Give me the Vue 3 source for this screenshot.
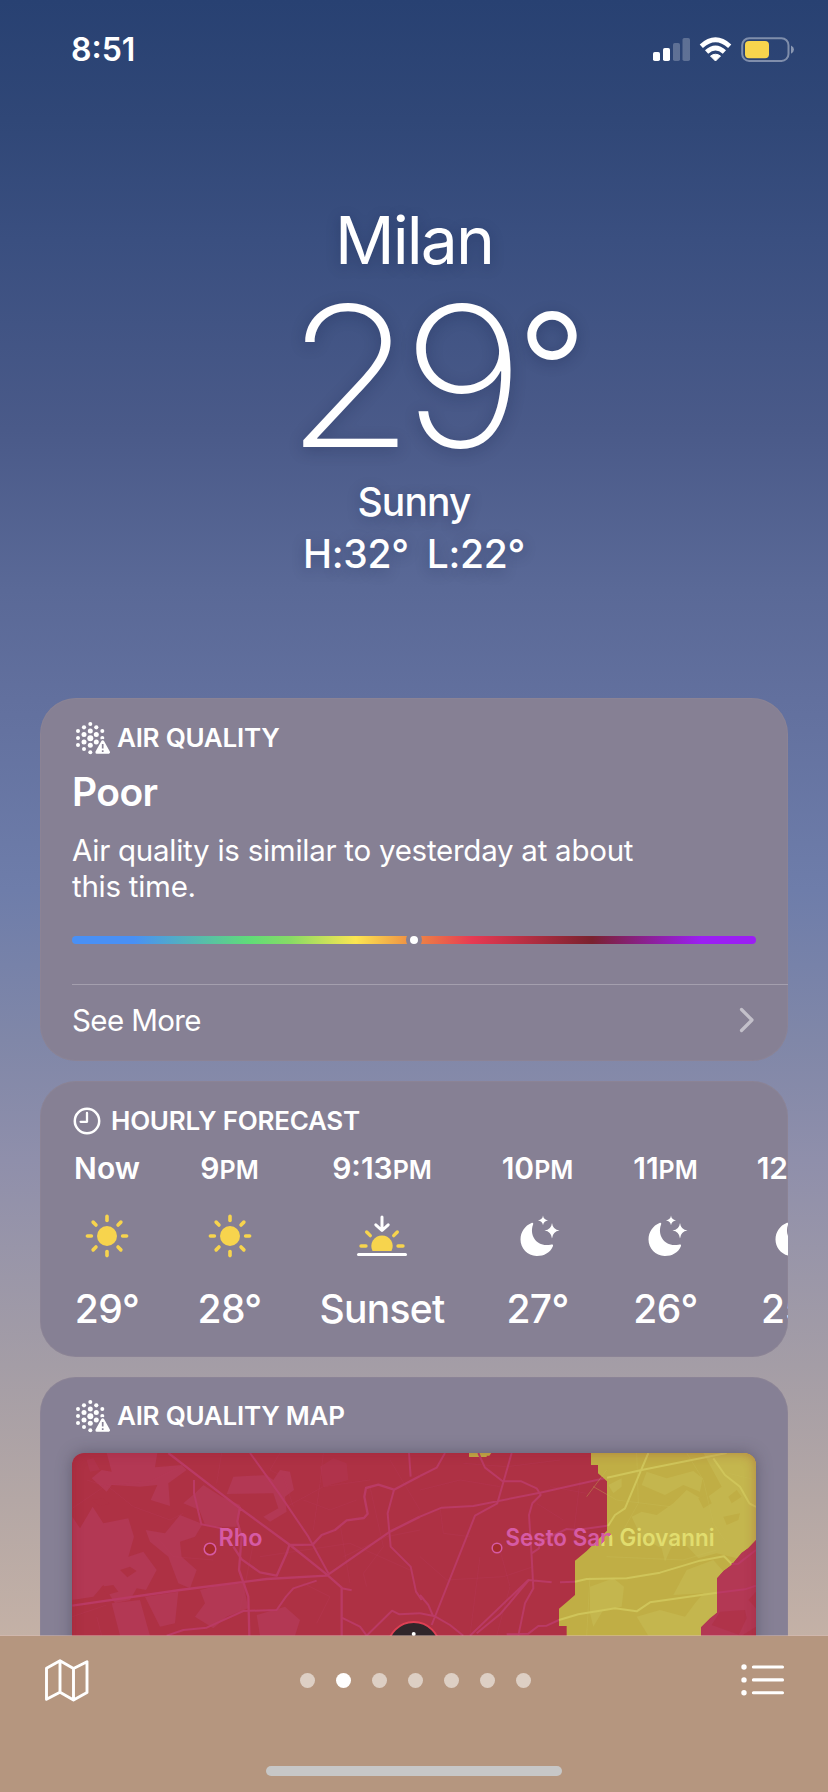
<script setup>
const hours = [
  { label: 'Now', suffix: '', icon: 'sun', value: '29°', width: 122 },
  { label: '9', suffix: 'PM', icon: 'sun', value: '28°', width: 123 },
  { label: '9:13', suffix: 'PM', icon: 'sunset', value: 'Sunset', width: 182 },
  { label: '10', suffix: 'PM', icon: 'moon', value: '27°', width: 129 },
  { label: '11', suffix: 'PM', icon: 'moon', value: '26°', width: 127 },
  { label: '12', suffix: 'AM', icon: 'moon', value: '25°', width: 128 },
]
const rays = [0, 45, 90, 135, 180, 225, 270, 315]
const dots = [
  [3, 9, 2], [3, 16, 2], [3, 23, 2],
  [9, 5.3, 2.1], [9, 12.6, 2.5], [9, 20, 2.5], [9, 27, 2],
  [15.3, 2, 2], [15.3, 9, 2.5], [15.3, 16.2, 3], [15.3, 23.3, 2.5], [15.3, 30.3, 2],
  [21.3, 5.3, 2.1], [21.3, 12.6, 2.5], [21.3, 20, 2.5],
  [27.3, 9, 2], [27.3, 16, 2],
]
const pages = 7
const activePage = 1
</script>

<template>
  <div class="screen">
    <header class="status">
      <span class="clock">8:51</span>
      <svg class="status-icons" width="142" height="26" viewBox="0 0 142 26">
        <g fill="#fff">
          <rect x="0" y="15" width="7" height="9" rx="1.8" />
          <rect x="10" y="11" width="7" height="13" rx="1.8" />
          <g opacity=".24">
            <rect x="20" y="6" width="7" height="18" rx="1.8" />
            <rect x="29.500" y="1" width="7.500" height="23" rx="1.800" />
          </g>
          <path d="M62.500 24 L67.500 19 Q62.500 15.500 57.500 19 Z" stroke="#fff" stroke-width="1" stroke-linejoin="round" />
        </g>
        <g fill="none" stroke="#fff" stroke-width="4.800">
          <path d="M48.300 9.200 Q62.500 -3.600 76.700 9.200" />
          <path d="M53.600 15 Q62.500 7 71.400 15" />
        </g>
        <rect x="89.200" y="1.200" width="46.300" height="22.700" rx="7" fill="none" stroke="#fff" stroke-opacity=".4" stroke-width="2" />
        <rect x="92" y="4" width="24" height="17.200" rx="4" fill="#f7d44d" />
        <path d="M138 8.500 Q141 10 141 12.500 T138 16.800 Z" fill="#fff" opacity=".45" />
      </svg>
    </header>

    <section class="summary">
      <h1 class="city">Milan</h1>
      <div class="temperature"><span class="digits">29</span><span class="degree">°</span></div>
      <div class="condition">Sunny</div>
      <div class="range"><span>H:32°</span><span>L:22°</span></div>
    </section>

    <main class="cards">
      <section class="card air">
        <h2 class="card-title">
          <svg class="air-icon" width="36" height="34" viewBox="0 0 36 34">
            <circle v-for="(d, i) in dots" :key="i" :cx="d[0]" :cy="d[1]" :r="d[2]" fill="#fff" />
            <path d="M27.700 19.500 L33.600 30.300 H21.800 Z" fill="#fff" stroke="#868094" stroke-width="5" stroke-linejoin="round" />
            <path d="M27.700 19.800 L33.500 30.300 H21.900 Z" fill="#fff" stroke="#fff" stroke-width="3" stroke-linejoin="round" />
            <path d="M27.700 22 V26.500 M27.700 28.300 V30" stroke="#868094" stroke-width="1.700" />
          </svg>
          <span>AIR QUALITY</span>
        </h2>
        <div class="rating">Poor</div>
        <p class="description">Air quality is similar to yesterday at about<br />this time.</p>
        <div class="scale"><span class="marker"></span></div>
        <div class="more">
          <span>See More</span>
          <svg width="16" height="26" viewBox="0 0 16 26"><path d="M2.500 2.500 L13 13 L2.500 23.500" fill="none" stroke="#fff" stroke-opacity=".5" stroke-width="3.200" stroke-linecap="round" stroke-linejoin="round" /></svg>
        </div>
      </section>

      <section class="card hourly">
        <h2 class="card-title">
          <svg class="clock-icon" width="28" height="28" viewBox="0 0 28 28">
            <circle cx="14" cy="14" r="12.200" fill="none" stroke="#fff" stroke-width="2.500" />
            <path d="M14 6 V14.800 H7.600" fill="none" stroke="#fff" stroke-width="2.300" stroke-linecap="round" stroke-linejoin="round" />
          </svg>
          <span>HOURLY FORECAST</span>
        </h2>
        <div class="hours">
          <div v-for="(h, i) in hours" :key="i" class="hour" :style="{ width: h.width + 'px' }">
            <div class="hour-time">{{ h.label }}<small v-if="h.suffix">{{ h.suffix }}</small></div>
            <svg v-if="h.icon === 'sun'" width="52" height="52" viewBox="-26 -26 52 52">
              <circle r="10" fill="#f7d44d" />
              <path v-for="a in rays" :key="a" d="M0 -15.600 V-19.600" :transform="`rotate(${a})`" stroke="#f7d44d" stroke-width="3.600" stroke-linecap="round" />
            </svg>
            <svg v-else-if="h.icon === 'sunset'" width="52" height="52" viewBox="-26 -26 52 52">
              <g fill="none" stroke="#fff" stroke-width="3" stroke-linecap="round" stroke-linejoin="round">
                <path d="M0 -19 V-6 M-6.200 -11.200 L0 -5.500 L6.200 -11.200" />
                <path d="M-23.500 18.500 H23.500" />
              </g>
              <path d="M-9.500 15 A10.700 10.700 0 1 1 9.500 15 Z" fill="#f7d44d" />
              <path d="M-15.300 -4 L-11.700 -.4 M15.300 -4 L11.700 -.4 M-21 10 H-16 M21 10 H16" stroke="#f7d44d" stroke-width="3.400" stroke-linecap="round" />
            </svg>
            <svg v-else width="52" height="52" viewBox="-28 -26 52 52" fill="#fff">
              <path d="M-8.500 -13 C-7 -13.600 -6.400 -12.700 -7 -11.200 C-11 -.5 -3 11.500 10.500 8.700 C12.600 8.200 13.600 8.600 12.800 10.500 C10 17 3.500 20.200 -3.500 20 C-12.500 19.700 -19.500 12.500 -19.500 3.500 C-19.500 -4 -15 -10.400 -8.500 -13 Z" />
              <path d="M3 -20.500 Q3.500 -16.200 8 -15.600 Q3.500 -15 3 -10.700 Q2.500 -15 -2 -15.600 Q2.500 -16.200 3 -20.500 Z" />
              <path d="M12 -13 Q12.800 -6.400 19.500 -5.400 Q12.800 -4.400 12 2.500 Q11.200 -4.400 4.500 -5.400 Q11.200 -6.400 12 -13 Z" />
            </svg>
            <div class="hour-value">{{ h.value }}</div>
          </div>
        </div>
      </section>

      <section class="card map-card">
        <h2 class="card-title">
          <svg class="air-icon" width="36" height="34" viewBox="0 0 36 34">
            <circle v-for="(d, i) in dots" :key="i" :cx="d[0]" :cy="d[1]" :r="d[2]" fill="#fff" />
            <path d="M27.700 19.500 L33.600 30.300 H21.800 Z" fill="#fff" stroke="#868095" stroke-width="5" stroke-linejoin="round" />
            <path d="M27.700 19.800 L33.500 30.300 H21.900 Z" fill="#fff" stroke="#fff" stroke-width="3" stroke-linejoin="round" />
            <path d="M27.700 22 V26.500 M27.700 28.300 V30" stroke="#868095" stroke-width="1.700" />
          </svg>
          <span>AIR QUALITY MAP</span>
        </h2>
        <div class="map">
          <svg width="684" height="260" viewBox="72 1453 684 260">
            <defs>
              <linearGradient id="labelFill" gradientUnits="userSpaceOnUse" x1="589" y1="1540" x2="605" y2="1556">
                <stop offset=".5" stop-color="#d65aa5" />
                <stop offset=".5" stop-color="#e1dd6e" />
              </linearGradient>
            </defs>
            <rect x="72" y="1453" width="684" height="260" fill="#ae3144" />
            <!-- western districts -->
            <g transform="translate(40 1370) scale(.33333)">
              <g fill="#b33854">
                <path d="M200 249 L352 249 L345 292 L425 285 L440 300 L385 340 L390 408 L332 390 L352 345 L300 350 L215 345 L200 365 L155 325 L185 300 L215 305 Z" />
                <path d="M97 440 L120 475 L158 410 L190 460 L265 445 L282 500 L265 560 L310 545 L350 600 L318 660 L290 655 L270 690 L225 700 L190 645 L160 680 L97 690 Z" />
                <path d="M465 370 L490 345 L545 380 L600 405 L590 470 L545 470 L495 465 L478 420 L430 400 Z" />
                <path d="M580 320 L680 315 L700 330 L720 300 L750 305 L762 360 L735 380 L740 425 L690 455 L670 440 L715 415 L700 370 L560 372 Z" />
                <path d="M317 480 L375 490 L420 435 L488 462 L465 500 L420 515 L425 560 L470 600 L450 655 L415 640 L385 560 L330 515 Z" />
                <path d="M480 660 L540 645 L610 640 L625 715 L560 740 L520 775 L465 740 L495 700 Z" />
                <path d="M215 700 L300 690 L325 780 L330 797 L240 797 Z M315 680 L415 665 L405 760 L360 770 Z M650 735 L735 710 L780 750 L765 797 L660 797 Z" />
                <path d="M840 290 L880 265 L920 280 L925 330 L850 350 Z M140 270 L160 265 L180 300 L150 305 Z" opacity=".45" />
              </g>
              <g fill="#ae3144">
                <path d="M155 390 L190 385 L208 402 L180 408 Z M240 600 L270 590 L290 603 L262 622 Z M185 650 L220 645 L235 665 L200 675 Z" />
              </g>
              <g fill="none" stroke="#b93b5b" stroke-width="1.500" opacity=".55">
                <path d="M97 415 L200 345 L330 335 L420 290 M140 330 L205 350 L280 410 L390 450 L430 430 M97 740 L200 705 M170 740 L185 797 M720 249 L690 300 L730 320 L760 410 M740 410 L850 350 L990 330 M790 390 L870 420 L950 390 M850 249 L840 340 L820 480 M990 350 L1030 530 L970 610 L980 650 M900 460 L930 640 M660 560 L930 520 L1110 600 M790 640 L870 680 L830 760 M640 520 L600 720 M545 249 L530 340 M350 500 L400 560 L520 570 M910 560 L1040 500 L1140 480 M1050 270 L1140 420" />
              </g>
              <g fill="none" stroke="#ba3a64" stroke-linejoin="round">
                <path d="M385 249 L600 415 L750 525 L860 613 L905 653 V797 M97 707 L420 660 L680 627 L860 617 L1050 485 L1140 440 M600 410 L592 455 L605 500 L597 600 L625 680 L628 797 M580 530 L605 568 L660 607 L710 617 L740 550 L748 525 L818 524 L845 495 L885 480 L920 451 L972 444 L983 431 L973 380 L978 354 L1015 344 L1062 359 L1140 318" stroke-width="7" />
                <path d="M630 249 L717 370 L805 500 L865 610 M462 330 V370 L484 463 L545 475 M380 797 L430 780 L500 773 L610 723 L710 720 L738 680 L760 655 L830 632 M1107 249 L1112 320 M1062 359 L1043 430 L1052 530 L1112 590 L1128 665 L1145 690 M905 655 L935 661 M980 797 L1056 722 L1078 733 L1140 730 M905 743 L960 770 L980 797" stroke-width="6" />
              </g>
            </g>
            <!-- eastern districts -->
            <g transform="translate(420 1370) scale(.33333)">
              <path d="M147 249 H214 L208 257 H200 V261 H147 Z" fill="#c0ae45" />
              <g fill="none" stroke="#b93b5b" stroke-width="1.500" opacity=".6">
                <path d="M0 360 L120 330 L240 350 M130 280 L260 290 L420 270 M60 410 L70 490 L150 500 M180 560 L150 797 M240 540 L270 650 L230 797 M0 560 L80 630 L250 620 L340 590 M350 400 L430 450 M390 350 L500 370 M480 330 L460 500" />
              </g>
              <g fill="none" stroke="#ba3a64" stroke-width="6" stroke-linejoin="round">
                <path d="M275 249 L232 400 L165 437 L35 765 M0 440 L65 413 L160 408 L360 368 L561 323 M0 318 L50 293 L75 249 M175 249 L195 293 L248 334 L304 334 L350 355 L362 375 L337 400 L327 435 L335 560 L340 655 L315 700 L295 797 M335 550 L357 535 L360 515 L440 477 L470 480 L561 467 M150 797 L325 630 L395 637 M420 637 L465 635 M170 790 L240 733 L325 632 M0 675 L25 705 L40 740 M0 730 L45 739 L90 765 L130 797 M260 793 L325 791 L355 768 L380 767 L417 750" />
              </g>
              <path d="M513 249 H1008 V510 L985 535 L965 548 L935 585 L910 604 L891 625 V728 L870 745 L843 772 V1050 H440 V768 H417 V716 L440 697 L465 675 V572 L500 543 L561 482 V334 L534 310 V285 H513 Z" fill="#c0ae45" />
              <g fill="#c4b64e">
                <path d="M680 305 L740 325 L820 303 L848 325 L840 365 L790 345 L735 375 L665 345 Z M850 249 H1008 V510 L950 565 L890 550 L835 565 L775 500 L750 540 L735 575 L725 535 L665 505 L635 440 L665 425 L710 435 L760 400 L800 360 L850 390 L905 350 Z" />
                <path d="M510 650 L580 625 L612 650 L605 710 L550 720 L520 770 L510 730 Z M800 600 L880 570 L910 604 L891 625 V728 L843 772 V797 H685 L650 740 L720 720 L795 740 L825 700 L850 670 L760 675 Z M565 345 L605 325 L605 350 L580 370 Z" />
              </g>
              <path d="M670 390 L710 370 L755 390 L735 410 L690 425 Z M835 385 L865 375 L875 400 L850 415 Z M925 380 L950 360 L965 380 L935 400 Z M910 440 L960 430 L955 450 L920 465 Z" fill="#c0ae45" />
              <path d="M650 249 L655 400 L610 480 M520 350 L590 390 L750 410 M560 300 L500 380 M800 249 L850 330 L880 460 L920 520 M925 310 L1008 330 M510 620 L500 797 M560 560 L790 570 L890 540" fill="none" stroke="#c9bc57" stroke-width="1.500" opacity=".7" />
              <g fill="none" stroke="#cfc55a" stroke-width="6" stroke-linejoin="round">
                <path d="M561 323 L665 300 L920 249 M685 249 L655 320 L615 415 L585 435 L564 468 M880 265 L915 315 L960 350 L988 400 L1008 411 M465 635 L500 627 L620 625 L720 608 L840 572 L912 559 L935 582 M417 750 L475 733 L585 715 L650 724 L690 697 L891 668" />
              </g>
              <path d="M1008 510 L985 535 L965 548 L935 585 L910 604 L891 625 V728 L870 745 L843 772 V1050 H1008 Z" fill="#b33854" />
              <path d="M875 765 L900 725 L975 720 L980 745 L955 797 H1008 V715 L985 690 L1008 665 V770 L965 797" fill="#ae3144" opacity=".6" />
              <path d="M891 668 L975 658 L1008 647 M935 582 L955 581 L1008 540" fill="none" stroke="#ba3a64" stroke-width="6" />
            </g>
            <circle cx="210" cy="1549" r="5.800" fill="#a62a2e" stroke="#d65aa5" stroke-width="1.500" />
            <circle cx="497" cy="1548" r="4.800" fill="#a62a2e" stroke="#d65aa5" stroke-width="1.500" />
            <text x="218.500" y="1546" class="place" fill="#d65aa5" textLength="44" lengthAdjust="spacingAndGlyphs">Rho</text>
            <text x="505.500" y="1546" class="place" fill="url(#labelFill)" textLength="209" lengthAdjust="spacingAndGlyphs">Sesto San Giovanni</text>
            <circle cx="413.700" cy="1648" r="26" fill="#30262a" stroke="#dd4054" stroke-width="2" />
            <circle cx="413.700" cy="1634" r="2" fill="#fff" />
          </svg>
        </div>
      </section>
    </main>

    <footer class="toolbar">
      <div class="tools">
        <svg width="46" height="44" viewBox="0 0 46 44" fill="none" stroke="#fff" stroke-width="2.900" stroke-linejoin="round">
          <path d="M2.500 10.300 L16 2.700 L29.500 10.500 L43 3.700 V34.500 L29.500 42 L16 34.200 L2.500 41.300 Z M16 2.700 V34.200 M29.500 10.500 V42" />
        </svg>
        <div class="pager">
          <i v-for="p in pages" :key="p" :class="{ active: p - 1 === activePage }"></i>
        </div>
        <svg width="44" height="34" viewBox="0 0 44 34" fill="#fff">
          <circle v-for="y in [4, 16.900, 29.700]" :key="y" cx="3" :cy="y" r="2.700" />
          <path d="M12.400 4 H41.500 M12.400 16.900 H41.500 M12.400 29.700 H41.500" stroke="#fff" stroke-width="3.100" stroke-linecap="round" />
        </svg>
      </div>
      <div class="home-bar"></div>
    </footer>
  </div>
</template>

<style scoped>
.screen {
  width: 828px;
  height: 1792px;
  display: flex;
  flex-direction: column;
  overflow: hidden;
  color: #fff;
  font-family: Inter, "Liberation Sans", sans-serif;
  background: linear-gradient(180deg, #284172 0, #304777 120px, #3a4f80 240px, #4a5a89 430px, #5a6997 590px, #62709e 700px, #6e7daa 890px, #8087a8 1040px, #8f8fab 1160px, #a49da6 1365px, #b4a7a5 1500px, #c4b1a6 1636px);
}
.status {
  height: 100px;
  padding: 0 33px 0 71px;
  display: flex;
  justify-content: space-between;
  align-items: center;
}
.clock { font-size: 32px; font-weight: 600; line-height: 40px; letter-spacing: 0; }
.summary {
  display: flex;
  flex-direction: column;
  align-items: center;
  height: 498px;
  padding-top: 100px;
  text-shadow: 0 3px 14px rgba(15, 25, 60, .28);
}
.city { margin: 0; font-size: 66px; font-weight: 400; line-height: 80px; letter-spacing: -1.9px; }
.temperature { display: flex; margin-top: 6px; padding-left: 44px; height: 182px; font-size: 195px; font-weight: 200; line-height: 180px; white-space: nowrap; }
.digits { letter-spacing: -12px; transform: scaleX(1.08); transform-origin: left center; }
.degree { margin: -20px 0 0 22px; font-size: 155px; font-weight: 270; line-height: 206px; }
.condition { margin-top: 8px; font-size: 39px; font-weight: 500; line-height: 52px; letter-spacing: -.9px; }
.range { display: flex; gap: 18px; font-size: 39px; font-weight: 500; line-height: 52px; letter-spacing: -.3px; }
.cards { height: 938px; padding: 0 40px; display: flex; flex-direction: column; gap: 20px; overflow: hidden; box-sizing: border-box; }
.card { flex: none; box-sizing: border-box; border-radius: 36px; background: #868094; overflow: hidden; box-shadow: inset 0 0 0 1px rgba(160, 145, 155, .2); }
.card-title { margin: 0; display: flex; align-items: center; font-size: 26px; font-weight: 560; line-height: 32px; height: 34px; letter-spacing: -.25px; }
.air { height: 363px; padding: 23px 0 0 32px; display: flex; flex-direction: column; }
.air-icon { margin: 2px 6px 0 3px; }
.rating { margin-top: 13px; font-size: 39px; font-weight: 600; line-height: 48px; letter-spacing: -.6px; }
.description { margin: 16px 0 0; font-size: 29.5px; font-weight: 400; line-height: 36px; letter-spacing: -.26px; }
.scale { margin-top: 32px; width: 684px; height: 8px; border-radius: 4px; display: flex; align-items: center; background: linear-gradient(90deg, #4990f5 0, #4990f5 9%, #60dc78 26%, #88db65 32%, #fce651 41.500%, #ee8e43 49.500%, #e73a53 58.500%, #7a222f 76%, #9b1ff3 92%); }
.marker { width: 8px; height: 8px; margin-left: 334px; border: 4px solid #868094; border-radius: 50%; background: #fff; }
.more { margin-top: 40px; height: 75px; padding: 0 33px 7px 0; display: flex; align-items: center; justify-content: space-between; border-top: 1px solid #a49fae; font-size: 29.5px; letter-spacing: -.6px; }
.hourly { height: 276px; padding-top: 23px; }
.hourly .card-title { padding-left: 33px; }
.clock-icon { margin-right: 10px; }
.hours { display: flex; margin: 12px 0 0 6px; }
.hour { flex: none; display: flex; flex-direction: column; align-items: center; white-space: nowrap; }
.hour-time { height: 36px; font-size: 30px; font-weight: 600; line-height: 36px; letter-spacing: 0; margin-bottom: 24px; }
.hour-time small { font-size: 25px; }
.hour-value { margin-top: 22px; font-size: 39px; font-weight: 500; line-height: 50px; letter-spacing: -.7px; }
.map-card { height: 400px; padding: 22px 32px 0; background: #868095; }
.map { margin-top: 20px; height: 260px; border-radius: 12px; overflow: hidden; box-shadow: 0 0 16px rgba(50, 45, 65, .4); position: relative; }
.map::after { content: ""; position: absolute; inset: 0; border-radius: 12px; box-shadow: inset 0 0 12px rgba(140, 20, 40, .3); }
.map svg { display: block; }
.place { font: 600 24px Inter, "Liberation Sans", sans-serif; }
.toolbar { flex: none; height: 156px; box-sizing: border-box; background: #b5967f; box-shadow: 0 -1px 0 rgba(220, 190, 180, .5); position: relative; padding: 21px 43px 0 44px; display: flex; flex-direction: column; align-items: center; }
.tools { width: 100%; height: 46px; display: flex; justify-content: space-between; align-items: center; }
.pager { display: flex; gap: 21px; margin-right: 1px; }
.pager i { width: 15px; height: 15px; border-radius: 50%; background: rgba(255, 255, 255, .54); }
.pager .active { background: #fff; }
.home-bar { margin: 63px 1px 0 0; width: 296px; height: 10px; border-radius: 5px; background: #c7c7c7; }
</style>
